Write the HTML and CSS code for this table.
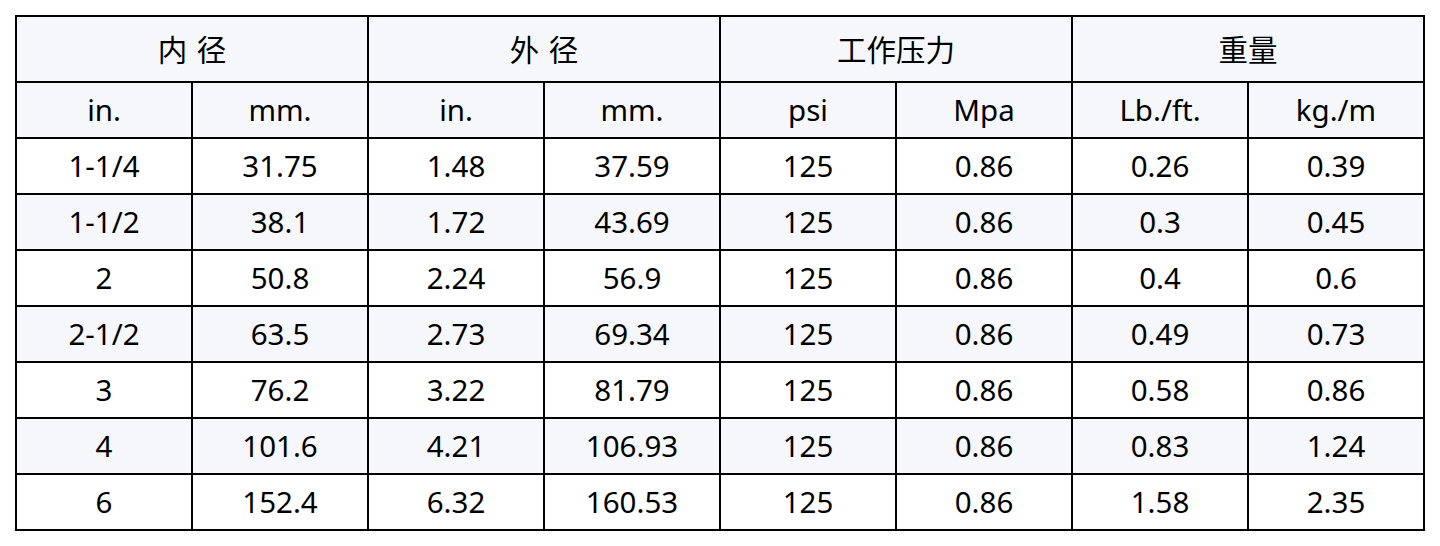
FILE: index.html
```html
<!DOCTYPE html>
<html lang="zh">
<head>
<meta charset="utf-8">
<title>规格表</title>
<link rel="stylesheet" href="styles.css">
</head>
<body>
<div class="spec-table">
  <div class="cell head span2">内 径</div>
  <div class="cell head span2">外 径</div>
  <div class="cell head span2">工作压力</div>
  <div class="cell head span2">重量</div>

  <div class="cell shade">in.</div><div class="cell shade">mm.</div>
  <div class="cell shade">in.</div><div class="cell shade">mm.</div>
  <div class="cell shade">psi</div><div class="cell shade">Mpa</div>
  <div class="cell shade">Lb./ft.</div><div class="cell shade">kg./m</div>

  <div class="cell">1-1/4</div><div class="cell">31.75</div><div class="cell">1.48</div><div class="cell">37.59</div><div class="cell">125</div><div class="cell">0.86</div><div class="cell">0.26</div><div class="cell">0.39</div>
  <div class="cell shade">1-1/2</div><div class="cell shade">38.1</div><div class="cell shade">1.72</div><div class="cell shade">43.69</div><div class="cell shade">125</div><div class="cell shade">0.86</div><div class="cell shade">0.3</div><div class="cell shade">0.45</div>
  <div class="cell">2</div><div class="cell">50.8</div><div class="cell">2.24</div><div class="cell">56.9</div><div class="cell">125</div><div class="cell">0.86</div><div class="cell">0.4</div><div class="cell">0.6</div>
  <div class="cell shade">2-1/2</div><div class="cell shade">63.5</div><div class="cell shade">2.73</div><div class="cell shade">69.34</div><div class="cell shade">125</div><div class="cell shade">0.86</div><div class="cell shade">0.49</div><div class="cell shade">0.73</div>
  <div class="cell">3</div><div class="cell">76.2</div><div class="cell">3.22</div><div class="cell">81.79</div><div class="cell">125</div><div class="cell">0.86</div><div class="cell">0.58</div><div class="cell">0.86</div>
  <div class="cell shade">4</div><div class="cell shade">101.6</div><div class="cell shade">4.21</div><div class="cell shade">106.93</div><div class="cell shade">125</div><div class="cell shade">0.86</div><div class="cell shade">0.83</div><div class="cell shade">1.24</div>
  <div class="cell">6</div><div class="cell">152.4</div><div class="cell">6.32</div><div class="cell">160.53</div><div class="cell">125</div><div class="cell">0.86</div><div class="cell">1.58</div><div class="cell">2.35</div>
</div>
</body>
</html>
```

FILE: styles.css
```css
html, body {
  margin: 0;
  padding: 0;
  background: #ffffff;
}

body {
  padding: 15px;
  font-family: "Noto Sans", "Noto Sans CJK SC", sans-serif;
  color: #000000;
}

.spec-table {
  display: grid;
  grid-template-columns: repeat(8, 174px);
  grid-template-rows: 64px repeat(8, 54px);
  gap: 2px;
  padding: 2px;
  width: max-content;
  background: #000000;
}

.cell {
  display: flex;
  align-items: center;
  justify-content: center;
  background: #ffffff;
  font-size: 29.5px;
  line-height: 1;
}

.cell.shade,
.cell.head {
  background: #f5f7fa;
}

.cell.span2 {
  grid-column: span 2;
}

.cell.head {
  font-family: "Noto Sans CJK SC", sans-serif;
  word-spacing: 3px;
}
```
